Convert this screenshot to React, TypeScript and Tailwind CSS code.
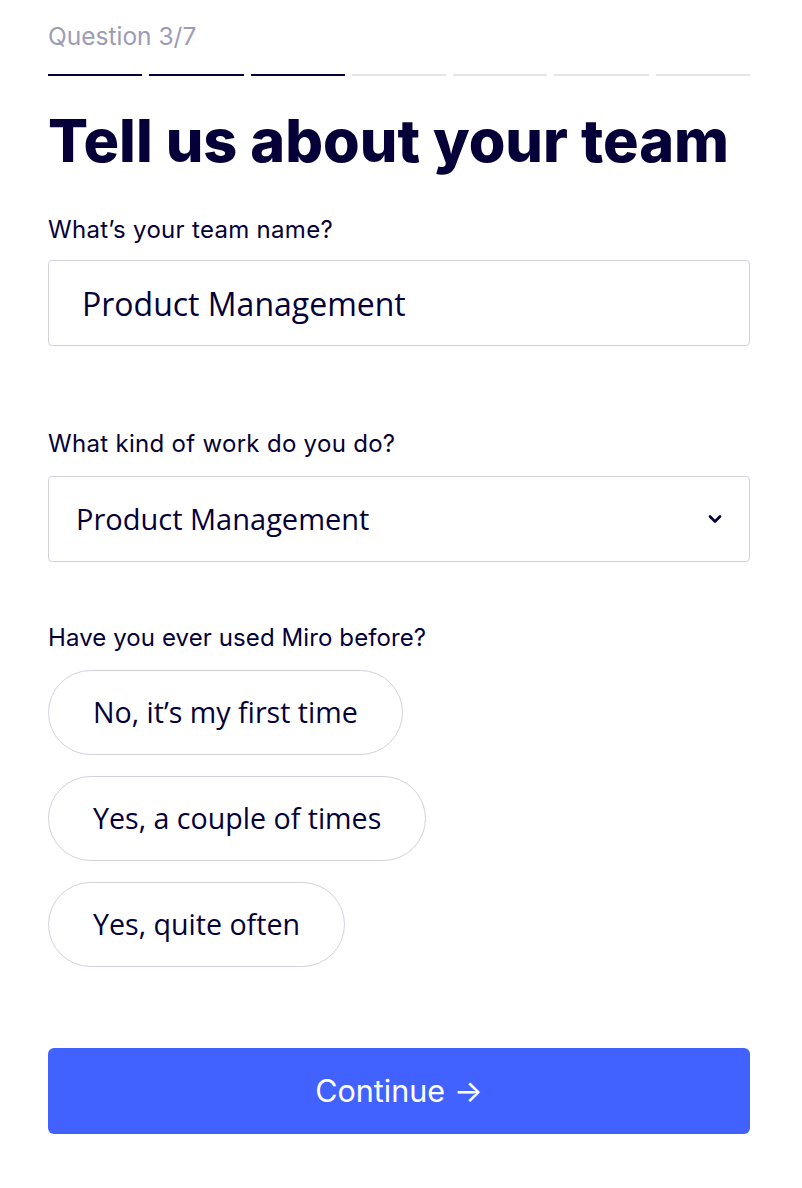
import React, { useState } from 'react';

const steps = 7;
const current = 3;

const experience = ['No, it’s my first time', 'Yes, a couple of times', 'Yes, quite often'];

export default function App() {
  const [team, setTeam] = useState('Product Management');
  const [work, setWork] = useState('Product Management');
  const [used, setUsed] = useState<string | null>(null);

  return (
    <div className="min-h-[1188px] bg-white pl-12 pt-[20px] text-[#050038]" style={{ fontFamily: 'Inter, "Noto Sans", sans-serif' }}>
      <div className="w-[702px]">
        <div className="text-[24.5px] leading-[32px] text-[#9c9cb4]">Question {current}/{steps}</div>

        {/* progress */}
        <div className="mt-[22px] flex gap-[7px]">
          {Array.from({ length: steps }).map((_, i) => (
            <div key={i} className={i < current ? 'h-[2px] flex-1 bg-[#050038]' : 'h-[2px] flex-1 bg-[#e6e6ea]'} />
          ))}
        </div>

        <h1 className="mt-[30px] text-[59.3px] font-extrabold leading-[70px]">Tell us about your team</h1>

        <label className="mt-[38px] block text-[24px] leading-[32px] tracking-[0.3px]">What’s your team name?</label>
        <input
          value={team}
          onChange={(e) => setTeam(e.target.value)}
          className="mt-[14px] block h-[86px] w-full rounded-[4px] border border-[#d2d2dc] px-[33px] text-[32px] text-[#050038] outline-none"
          style={{ fontFamily: '"Open Sans", sans-serif' }}
        />

        <label className="mt-[82px] block text-[24px] leading-[32px] tracking-[0.3px]">What kind of work do you do?</label>
        <div className="relative mt-[16px]">
          <select
            value={work}
            onChange={(e) => setWork(e.target.value)}
            className="block h-[86px] w-full appearance-none rounded-[4px] border border-[#d2d2dc] bg-white px-[27px] text-[29px] text-[#050038] outline-none"
            style={{ fontFamily: '"Open Sans", sans-serif' }}
          >
            <option>Product Management</option>
            <option>Engineering</option>
            <option>Design</option>
            <option>Marketing</option>
          </select>
          <svg className="pointer-events-none absolute right-[28px] top-[38px]" width="14" height="10" viewBox="0 0 14 10" fill="none">
            <path d="M2 2.5l5 5 5-5" stroke="#050038" strokeWidth="2.6" strokeLinecap="round" strokeLinejoin="round" />
          </svg>
        </div>

        <label className="mt-[60px] block text-[24px] leading-[32px] tracking-[0.1px]">Have you ever used Miro before?</label>
        <div className="mt-[16px] flex flex-col items-start gap-[21px]">
          {experience.map((opt) => (
            <button
              key={opt}
              onClick={() => setUsed(opt)}
              className={
                used === opt
                  ? 'h-[85px] rounded-full border-2 border-[#4262ff] px-[44px] text-[28.6px] text-[#050038]'
                  : 'h-[85px] rounded-full border border-[#d2d2dc] px-[44px] text-[28.6px] text-[#050038]'
              }
              style={{ fontFamily: '"Open Sans", sans-serif' }}
            >
              {opt}
            </button>
          ))}
        </div>

        <button className="mt-[81px] flex h-[86px] w-full items-center justify-center rounded-[6px] bg-[#4262ff] text-[30.5px] text-white">
          Continue →
        </button>
      </div>
    </div>
  );
}
